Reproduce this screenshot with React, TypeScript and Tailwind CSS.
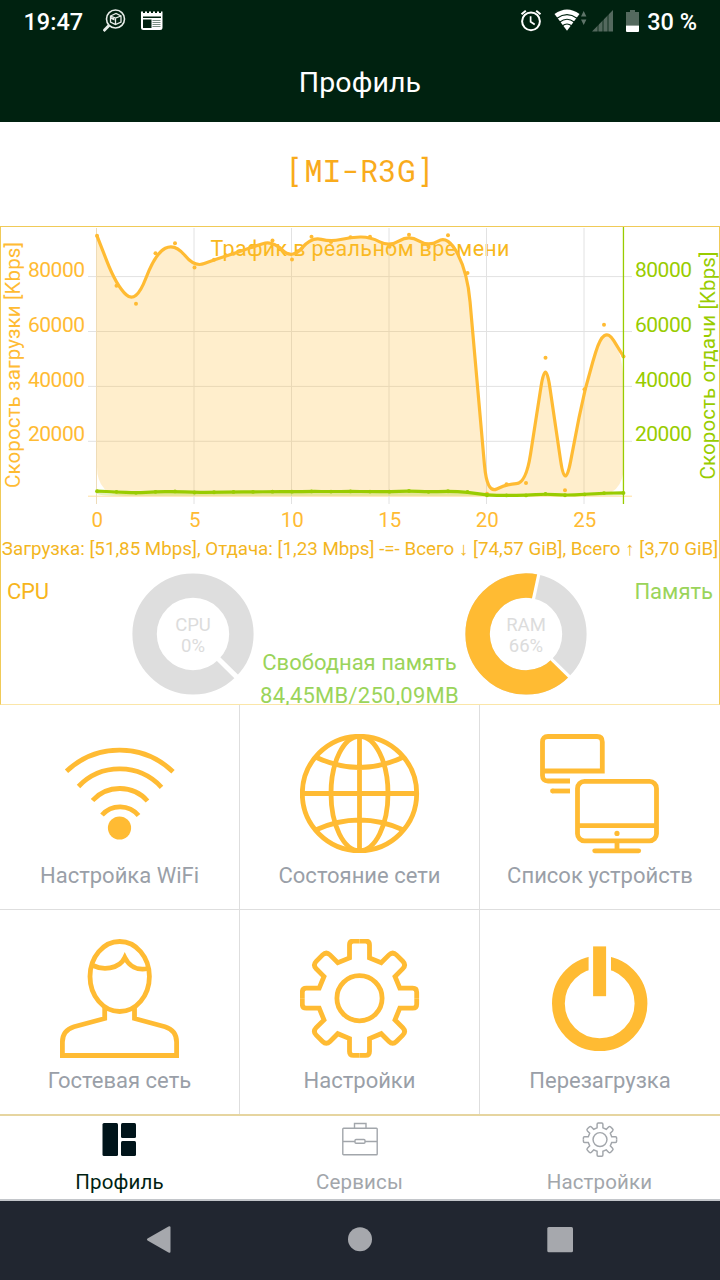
import type { ReactNode } from 'react';

const ORANGE = '#ffbb33';
const GREEN = '#99cc00';

const download = [
  94700, 76500, 69950, 88400, 92000, 83200, 86000, 88200, 90700, 93000, 86100, 94350, 92500, 94200,
  94350, 90700, 95100, 90700, 94900, 81200, 730, 4200, 4630, 50270, 2000, 38800, 62300, 50750,
];
const upload = [
  1700, 1450, 1100, 1450, 1600, 1200, 1300, 1400, 1450, 1500, 1500, 1600, 1550, 1600,
  1550, 1500, 1750, 1450, 1650, 1400, 200, 150, 150, 700, 200, 500, 1000, 1050,
];

type Point = [number, number];

const LEFT = 97;
const RIGHT = 623.5;
const BASE = 269.8;

function toPoints(values: number[]): Point[] {
  return values.map((v, i) => [LEFT + (i * (RIGHT - LEFT)) / 27, BASE - v / 364.3]);
}

// point on the segment a-b, at most `radius` away from a and never past the middle
function towards(a: Point, b: Point, radius: number): Point {
  const len = Math.hypot(b[0] - a[0], b[1] - a[1]);
  const k = len === 0 ? 0 : Math.min(radius / len, 0.5);
  return [a[0] + (b[0] - a[0]) * k, a[1] + (b[1] - a[1]) * k];
}

function roundedPath(pts: Point[], radius = 29) {
  let d = `M${pts[0].join(' ')}`;
  for (let i = 1; i < pts.length - 1; i++) {
    d += `L${towards(pts[i], pts[i - 1], radius).join(' ')}`;
    d += `Q${pts[i].join(' ')} ${towards(pts[i], pts[i + 1], radius).join(' ')}`;
  }
  return d + `L${pts[pts.length - 1].join(' ')}`;
}

function Series({ values, color, radius }: { values: number[]; color: string; radius: number }) {
  const pts = toPoints(values);
  const area: Point[] = [...pts, [RIGHT, BASE], [LEFT, BASE], pts[0]];
  return (
    <g>
      <path d={roundedPath(area)} fill={color} fillOpacity="0.25" />
      <path d={roundedPath(pts)} fill="none" stroke={color} strokeWidth="3.2" />
      {pts.map(([x, y], i) => (
        <circle key={i} cx={x} cy={y} r={radius} fill={color} />
      ))}
    </g>
  );
}

function TrafficChart() {
  const ticks = [20000, 40000, 60000, 80000];
  return (
    <svg width="718" height="307" viewBox="1 1 718 307" className="block" fontFamily="Roboto, sans-serif">
      <text x="210.5" y="30" fontSize="21.5" fill="#f8b81c" textLength="299">Трафик в реальном времени</text>
      {[0, ...ticks].map((t) => (
        <line key={t} x1="88" x2="632" y1={BASE + 0.4 - t / 364.3} y2={BASE + 0.4 - t / 364.3} stroke={t ? '#e2e2e2' : '#ffdf9f'} />
      ))}
      {[0, 5, 10, 15, 20, 25].map((t) => (
        <g key={t}>
          <line x1={LEFT + t * 19.5 - 0.5} x2={LEFT + t * 19.5 - 0.5} y1="2" y2="278" stroke={t ? '#e2e2e2' : '#eedcb8'} />
          <text x={LEFT + t * 19.5 + 0.3} y="301.3" fontSize="20.5" fill={ORANGE} textAnchor="middle">{t}</text>
        </g>
      ))}
      {ticks.map((t) => (
        <g key={t} fontSize="21">
          <text x="28" y={BASE - t / 364.3 + 0.5} fill={ORANGE} textLength="57">{t}</text>
          <text x="635" y={BASE - t / 364.3 + 0.5} fill={GREEN} textLength="57">{t}</text>
        </g>
      ))}
      <text transform="translate(20 262) rotate(-90)" fontSize="20.5" fill={ORANGE} textLength="246">Скорость загрузки [Kbps]</text>
      <text transform="translate(715 253.5) rotate(-90)" fontSize="20.5" fill={GREEN} textLength="228">Скорость отдачи [Kbps]</text>
      <Series values={download} color={ORANGE} radius={2} />
      <Series values={upload} color={GREEN} radius={1.9} />
      <rect x="622.8" y="1" width="1.3" height="277" fill={GREEN} />
    </svg>
  );
}

function Donut({ name, percent }: { name: string; percent: number }) {
  const gaps = percent > 0 ? [44.5, 44.5 + percent * 3.6] : [44.5];
  return (
    <svg width="122" height="122" viewBox="-61 -61 122 122" fontFamily="Roboto, sans-serif" className="block shrink-0">
      <circle r="48.4" fill="none" stroke="#dedede" strokeWidth="24.4" />
      {percent > 0 && (
        <circle
          r="48.4"
          fill="none"
          stroke={ORANGE}
          strokeWidth="24.4"
          pathLength="100"
          strokeDasharray={`${percent} 100`}
          transform="rotate(44.5)"
        />
      )}
      {gaps.map((a) => (
        <path key={a} d="M30 0H64" stroke="#fff" strokeWidth={percent > 0 ? 3.2 : 5} transform={`rotate(${a})`} />
      ))}
      <g fill="#dcdcdc" fontSize="18.5" textAnchor="middle">
        <text y="-3.5">{name}</text>
        <text y="17.5">{percent}%</text>
      </g>
    </svg>
  );
}

function TileIcon({ children }: { children: ReactNode }) {
  return (
    <svg width="120" height="120" viewBox="0 0 120 120" fill="none" stroke={ORANGE} strokeWidth="4.8" className="block">
      {children}
    </svg>
  );
}

const gearQuarter =
  'M0-57.2H6q4 0 4 4V-40.3L21.7-35.5L29.5-43.3q3.7-3.6 7.4 0L43.3-36.9q3.6 3.7 0 7.4L35.5-21.7L40.3-10H53.2q4 0 4 4V0';

function Gear({ hole }: { hole: number }) {
  return (
    <g>
      {[0, 90, 180, 270].map((a) => (
        <path key={a} d={gearQuarter} transform={`rotate(${a})`} />
      ))}
      <circle r={hole} />
    </g>
  );
}

const tiles: { label: string; icon: ReactNode }[] = [
  {
    label: 'Настройка WiFi',
    icon: (
      <>
        <path d="M6.5 37.3A77 77 0 0 1 113 37.8M18.5 52.5A57 57 0 0 1 101.5 53.3M32.5 66.5A37 37 0 0 1 87.5 67M42 81A24 24 0 0 1 78.5 81.5" />
        <circle cx="59.5" cy="94" r="11.6" fill={ORANGE} stroke="none" />
      </>
    ),
  },
  {
    label: 'Состояние сети',
    icon: (
      <>
        <circle cx="59.5" cy="59.5" r="57.2" />
        <ellipse cx="59.5" cy="59.5" rx="28.5" ry="57.2" />
        <path d="M59.5 2V117M2.5 59.5H116.5M15.5 23Q59.5 44 103.5 23M15.5 96Q59.5 76 103.5 96" />
      </>
    ),
  },
  {
    label: 'Список устройств',
    icon: (
      <>
        <path d="M30 47H8Q2.5 47 2.5 41.5V8Q2.5 2.5 8 2.5H57Q62.3 2.5 62.3 8V39.5M2.5 37H62.3" />
        <path d="M30 57H12.5" />
        <circle cx="12.5" cy="57" r="2.4" fill={ORANGE} stroke="none" />
        <rect x="37.5" y="47.4" width="79" height="59.4" rx="7" />
        <path d="M37.5 91.7H116.5M77 107V117" />
        <path d="M54.7 116.8H98.7" strokeLinecap="round" />
        <circle cx="77" cy="99.4" r="2.6" fill={ORANGE} stroke="none" />
      </>
    ),
  },
  {
    label: 'Гостевая сеть',
    icon: (
      <>
        <ellipse cx="59.7" cy="37.5" rx="29.7" ry="35" />
        <path d="M33 26.5C42 31 59 31 64.8 18.5C69 27 77 32 88 29.5" />
        <path d="M44.7 69V79.5L14 87.8Q2.4 91.5 2.4 103V116.5H116.6V103Q116.6 91.5 105 87.8L74.5 79.5V69" />
      </>
    ),
  },
  {
    label: 'Настройки',
    icon: (
      <g transform="translate(59.5 59.2)">
        <Gear hole={22.6} />
      </g>
    ),
  },
  {
    label: 'Перезагрузка',
    icon: (
      <>
        <circle cx="59.7" cy="64.4" r="41.3" strokeWidth="12.8" />
        <path d="M59.8 10V50" stroke="#fff" strokeWidth="22.4" />
        <path d="M59.6 7.4V57.2" strokeWidth="13" />
      </>
    ),
  },
];

function StatusBar() {
  return (
    <div className="flex h-[42px] items-center justify-between pr-[23px] pl-[23.5px] text-white">
      <div className="flex items-center">
        <span className="w-[79.5px] pt-[3px] text-[23.5px] leading-none font-medium">19:47</span>
        <svg width="24" height="24" viewBox="0 0 24 24" fill="none" stroke="#e6ece8" className="mr-[14px]">
          <circle cx="12.5" cy="10" r="9" strokeWidth="1.6" />
          <path d="M6 16.5L0.5 22" strokeWidth="3" />
          <path d="M7.5 7L13 4.5L18 7V13L12.5 15.5L7.5 13ZM7.5 7L12.5 9L18 7M12.5 9V15.5" strokeWidth="1.3" />
          <path d="M8 8L11.5 9.3V11.5L8 10Z" fill="#e6ece8" stroke="none" />
        </svg>
        <svg width="24" height="24" viewBox="0 0 24 24" fill="#fff">
          <path d="M0 2.5H2V4H4V2.5H6V4H8V2.5H10V4H12V2.5H14V4H16V2.5H18V4H20V2.5H21.5V18.5Q21.5 21 19 21H2.5Q0 21 0 18.5Z" />
          <path d="M2 7.5H20V9H2ZM2 10.5H10.5V19H2Z" fill="#002210" />
          <path d="M11.5 11.5H19.5M11.5 13.5H19.5M11.5 15.5H19.5M11.5 17.5H19.5" stroke="#7b8f84" strokeWidth="1" />
        </svg>
      </div>
      <div className="flex items-center">
        <svg width="24" height="24" viewBox="0 0 24 24" fill="none" stroke="#fff" className="mr-[11px]">
          <circle cx="12" cy="12.3" r="8.9" strokeWidth="2" />
          <path d="M11.6 7.3V12.8L15.7 15.5" strokeWidth="1.7" />
          <path d="M2.5 5.2L6.8 1.7M17.2 1.7L21.5 5.2" strokeWidth="2" />
        </svg>
        <svg width="34" height="24" viewBox="0 0 34 24" className="mr-[4px]">
          <path d="M0.5 5Q13 -4 25.5 5L13 21.7Z" fill="#fff" />
          <path d="M3 9.2Q13 2 23 9.2M5.8 13Q13 7.6 20.2 13M8.5 16.8Q13 13.3 17.5 16.8" fill="none" stroke="#002210" strokeWidth="1.1" />
          <path d="M27 7.5L29.7 2L32.4 7.5ZM27 10.5L29.7 16L32.4 10.5Z" fill="#5f756a" />
        </svg>
        <svg width="21" height="22" viewBox="0 0 21 22" className="mr-[13px]">
          <path d="M0 21.5L21 0V21.5Z" fill="#54695e" />
          <path d="M6 12V22M11 7V22M16 2V22" stroke="#002210" strokeWidth="0.8" />
        </svg>
        <svg width="13" height="23" viewBox="0 0 13 23" className="mr-[8px]">
          <path d="M0 2H4V0H9V2H13V15.5H0Z" fill="#54695e" />
          <path d="M0 15.5H13V21Q13 22 12 22H1Q0 22 0 21Z" fill="#fff" />
        </svg>
        <span className="pt-[3px] text-[23.5px] leading-none font-medium whitespace-nowrap">30 %</span>
      </div>
    </div>
  );
}

function TabBar() {
  return (
    <nav className="grid h-[87px] grid-cols-3 border-t-2 border-b-2 border-t-[#e6d5a0] border-b-[#c3c6ca] bg-white text-[20.5px] text-[#a2a6ab]">
      <div className="flex flex-col items-center pt-[5px] pr-px text-[#001f12]">
        <svg width="36" height="36" viewBox="0.5 0 36 36" fill="#00141a">
          <rect x="1" y="2" width="15.5" height="33" rx="1.5" />
          <rect x="19.5" y="2" width="15" height="15" rx="1.5" />
          <rect x="19.5" y="20" width="15" height="15" rx="1.5" />
        </svg>
        <span className="mt-[11px] leading-7 tracking-[0.15px]">Профиль</span>
      </div>
      <div className="flex flex-col items-center pt-[5px] pr-px">
        <svg width="36" height="36" viewBox="0 0 36 36" fill="none" stroke="#a2a6ab" strokeWidth="1.4">
          <rect x="0.8" y="7.3" width="34.4" height="26.5" rx="0.8" />
          <path d="M12.5 7.3V2.5H24V7.3M1 20.5H13M23 20.5H35" />
          <rect x="13" y="18.5" width="10" height="3.8" rx="1" />
        </svg>
        <span className="mt-[11px] leading-7 tracking-[0.15px]">Сервисы</span>
      </div>
      <div className="flex flex-col items-center pt-[5px] pr-px">
        <svg width="36" height="36" viewBox="-62 -64 124 124" fill="none" stroke="#a2a6ab" strokeWidth="5">
          <Gear hole={24} />
        </svg>
        <span className="mt-[11px] leading-7 tracking-[0.15px]">Настройки</span>
      </div>
    </nav>
  );
}

export default function App() {
  return (
    <div className="flex h-[1280px] w-[720px] flex-col overflow-hidden bg-white font-['Roboto',sans-serif]">
      <header className="h-[122px] bg-[#002210]">
        <StatusBar />
        <h1 className="pt-[21px] text-center text-[28.5px] leading-10 tracking-[0.1px] text-white">Профиль</h1>
      </header>

      <div className="flex h-[104px] items-center justify-center pb-[7px] font-['Roboto_Mono','Liberation_Mono',monospace] text-[30.5px] tracking-[0.3px] text-[#f9ab1c]">
        [MI-R3G]
      </div>

      <section className="h-[479px] border border-[#f0ca58] border-b-[#fbe6a8]">
        <TrafficChart />
        <p className="flex h-[34px] justify-center pt-[2px] text-[18.75px] leading-[26px] whitespace-nowrap text-[#f3b61f]">
          Загрузка: [51,85 Mbps], Отдача: [1,23 Mbps] -=- Всего ↓ [74,57 GiB], Всего ↑ [3,70 GiB]
        </p>
        <div className="flex h-[136px] text-[22px]">
          <span className="w-[131px] shrink-0 pt-[8px] pl-[6px] leading-8 tracking-[-0.2px] text-[#f7b51c]">CPU</span>
          <div className="pt-[5px]"><Donut name="CPU" percent={0} /></div>
          <div className="w-[211px] shrink-0 pt-[79px] text-center leading-8 whitespace-nowrap text-[#9ad45a]">
            <p>Свободная память</p>
            <p className="pt-px tracking-[0.25px]">84,45MB/250,09MB</p>
          </div>
          <div className="pt-[5px]"><Donut name="RAM" percent={66} /></div>
          <span className="grow pt-[8px] pr-[6px] text-right leading-8 text-[#9ad45a]">Память</span>
        </div>
      </section>

      <div className="grid h-[409px] grid-cols-[239px_239px_1fr] grid-rows-2 gap-px bg-[#dedede]">
        {tiles.map((tile) => (
          <div key={tile.label} className="flex flex-col items-center bg-white pt-[29px]">
            <TileIcon>{tile.icon}</TileIcon>
            <span className="mt-[6px] text-[22px] leading-8 whitespace-nowrap text-[#9a9fa8]">{tile.label}</span>
          </div>
        ))}
      </div>

      <TabBar />

      <div className="flex h-[79px] items-center justify-center bg-[#212630]">
        <svg width="720" height="79" viewBox="0 1 720 79" fill="#a6a8ad">
          <path d="M147.5 38.6L168.5 26.4Q170.5 25.6 170.5 27.5V51.5Q170.5 53.4 168.5 52.4L147.5 40.4Q146.3 39.5 147.5 38.6Z" />
          <circle cx="360" cy="39.3" r="12" />
          <rect x="547.3" y="27" width="25.7" height="25.2" rx="1.5" />
        </svg>
      </div>
    </div>
  );
}
